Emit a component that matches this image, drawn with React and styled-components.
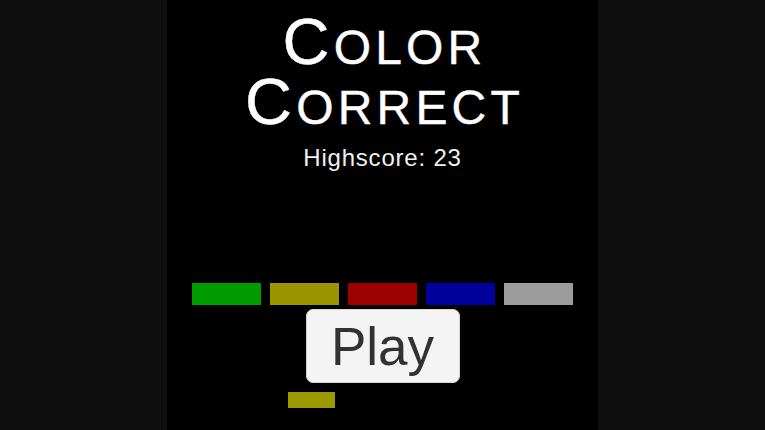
import React from "react";
import styled, { createGlobalStyle } from "styled-components";

const Global = createGlobalStyle`
  html, body { margin: 0; padding: 0; background: #0f0f0f; }
  body { font-family: "Liberation Sans", Arial, sans-serif; overflow: hidden; }
`;

const Page = styled.div`
  width: 765px;
  height: 430px;
  display: flex;
  justify-content: center;
  background: #0f0f0f;
`;

const Game = styled.div`
  width: 431px;
  height: 430px;
  background: #000;
  display: flex;
  flex-direction: column;
  align-items: center;
  padding-top: 12px;
  box-sizing: border-box;
`;

const Title = styled.h1`
  margin: 0;
  font-weight: 400;
  color: #fff;
  font-size: 48px;
  line-height: 60px;
  letter-spacing: 4.2px;
  text-align: center;
  display: flex;
  flex-direction: column;
  align-items: center;
  -webkit-text-stroke: 0.4px #fff;
`;

const TitleLine = styled.span`
  display: block;
  height: 60px;
  white-space: nowrap;
  margin-right: -4px;
`;

const Big = styled.span`
  font-size: 65px;
`;

const Highscore = styled.div`
  margin-top: 13px;
  color: #f0f0f0;
  font-size: 24px;
  line-height: 26px;
  letter-spacing: 0.8px;
`;

const Bars = styled.div`
  margin-top: 112px;
  display: flex;
  gap: 9.5px;
`;

const Bar = styled.div`
  width: 68.5px;
  height: 22px;
  background: ${(p) => p.$color};
`;

const PlayButton = styled.button`
  margin-top: 4px;
  width: 154px;
  height: 74px;
  border-radius: 7px;
  border: 1px solid #d6d6d6;
  background: #f4f4f4;
  color: #323232;
  font-family: "Liberation Sans", Arial, sans-serif;
  font-size: 53px;
  line-height: 1;
  padding: 0;
  display: flex;
  align-items: center;
  justify-content: center;
  box-sizing: border-box;
`;

const Paddle = styled.div`
  align-self: flex-start;
  margin-top: 9px;
  margin-left: 121px;
  width: 47px;
  height: 16px;
  background: #9c9a00;
`;

const colors = ["#009c00", "#9c9400", "#9c0000", "#00009c", "#9c9c9c"];

export default function App() {
  return (
    <>
      <Global />
      <Page>
        <Game>
          <Title>
            <TitleLine>
              <Big>C</Big>OLOR
            </TitleLine>
            <TitleLine>
              <Big>C</Big>ORRECT
            </TitleLine>
          </Title>
          <Highscore>Highscore: 23</Highscore>
          <Bars>
            {colors.map((c) => (
              <Bar key={c} $color={c} />
            ))}
          </Bars>
          <PlayButton>Play</PlayButton>
          <Paddle />
        </Game>
      </Page>
    </>
  );
}
